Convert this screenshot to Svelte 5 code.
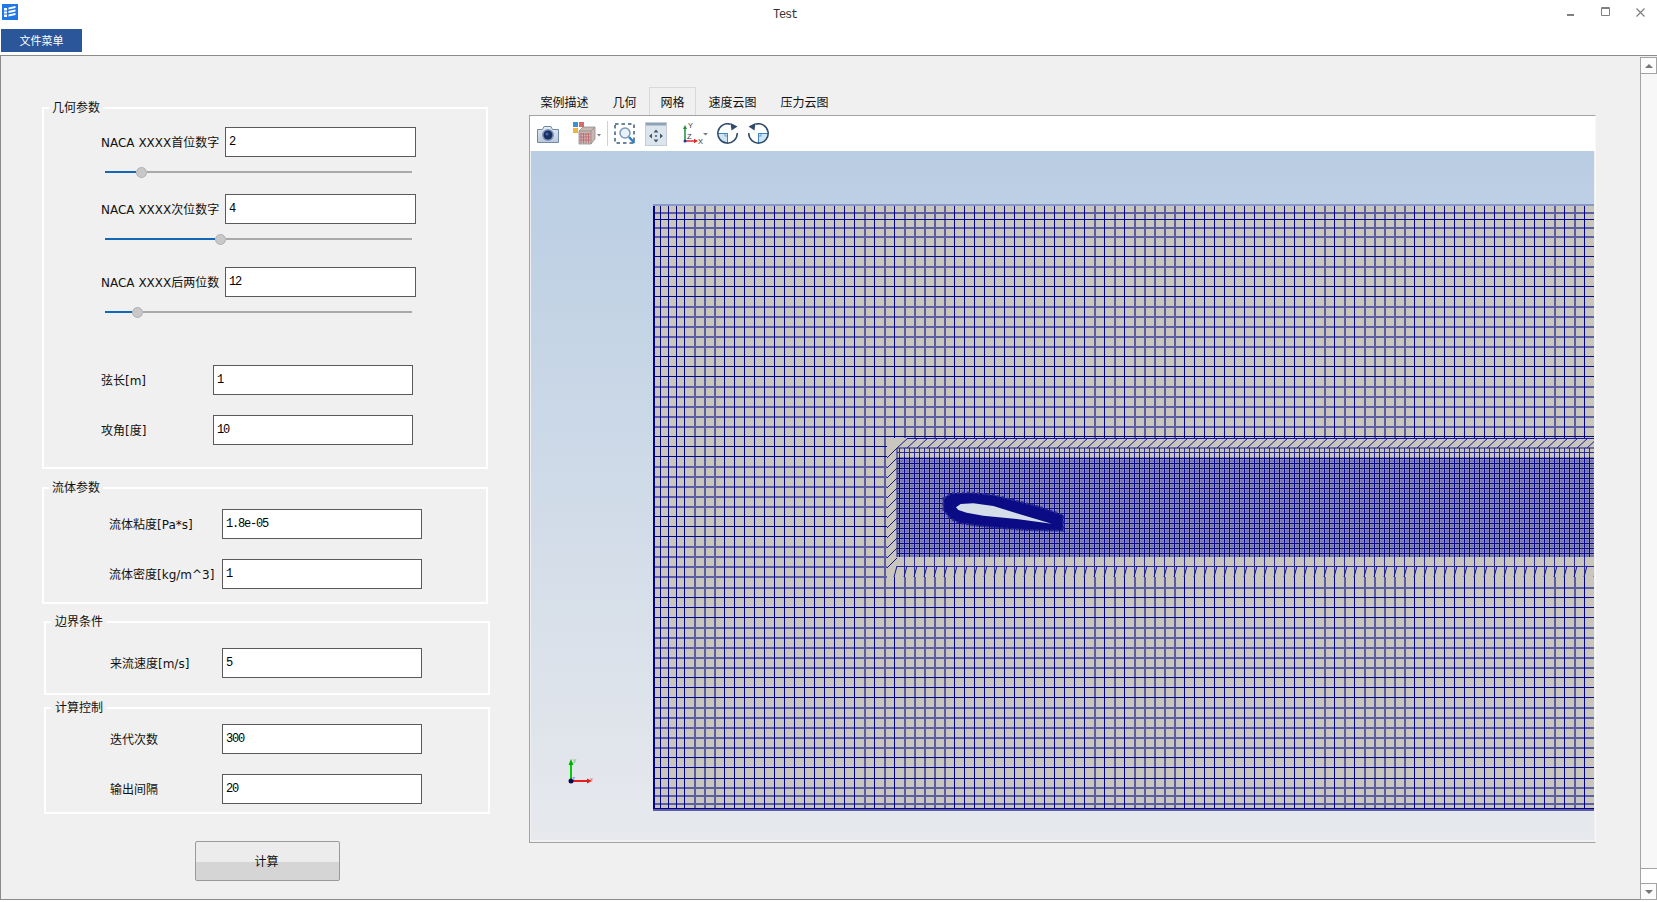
<script>
  const X0 = 653, X1 = 1594, Y0 = 205, Y1 = 809;
  const xs = [653.5, 660, 667.5, 675.5, 684];
  for (let x = 694; x < 1600; x += 10) xs.push(x);
  const ys = [205, 211.5, 219, 226.5, 235.5];
  for (let k = 0; k < 53; k++) ys.push(245.5 + k * 10.03);
  ys.push(777.5, 786.5, 794.5, 802.5, 808.5);

  const thickX = (x) => { if (x < 694) return false; const k = ((x - 694) / 10) % 23; return k <= 2 || k === 17 || k === 19 || k === 21 || k === 22; };
  const thickY = (i) => i === 1 || i === 3 || i === 4 || (i > 6 && i % 8 > 2);

  let thin = '', thick = '';
  xs.forEach((x) => {
    const c = Math.round(x) + 0.5;
    const d = x >= 887 && x < X1 + 10
      ? `M${c} ${Y0}V438M${c} 577V${Y1}`
      : `M${c} ${Y0}V${Y1}`;
    if (thickX(x)) thick += d; else thin += d;
  });
  ys.forEach((y, i) => {
    const c = Math.round(y) + 0.5;
    if (i === 0) return;
    const d = y > 438 && y < 577
      ? `M${X0} ${c}H887`
      : `M${X0} ${c}H${X1}`;
    if (thickY(i)) thick += d; else thin += d;
  });

  let band = 'M897 448H1594M897 448V557M908 438.500H1594';
  for (let x = 908; x < 1604; x += 10) band += `M${x} 438L${x - 11} 448`;
  for (let y = 448; y < 566; y += 10) band += `M887 ${y + 10}L897 ${y}`;
  for (let x = 894; x < 1600; x += 10) band += `M${x} 577L${x + 3} 566`;
  let sparse = '';
  for (let x = 899.5; x < 1600; x += 5) sparse += `M${x} 448V457`;
  for (let x = 904.5; x < 1600; x += 10) sparse += `M${x} 557V577`;
  sparse += 'M897 452.500H1594M897 566.500H1594';

  let denseV = '', denseV2 = '', denseH = '', denseH2 = '';
  for (let x = 899.5; x < 1600; x += 5) denseV += `M${x} 457V557`;
  for (let x = 902; x < 1600; x += 5) denseV2 += `M${x} 457V557`;
  for (let y = 458.5; y < 557; y += 5) denseH += `M897 ${y}H1594`;
  for (let y = 461; y < 557; y += 5) denseH2 += `M897 ${y}H1594`;

  const tabs = ['案例描述', '几何', '网格', '速度云图', '压力云图'];
  const blob = [[220,235],[245,220],[300,218],[370,225],[430,240],[500,258],[580,285],[580,332],[470,330],[400,325],[330,318],[270,310],[240,295],[220,270]]
    .map(([u, v]) => `${870 + u / 3},${420 + v / 3}`).join(' ');
  const foil = [[258,262],[272,252],[310,250],[370,258],[440,280],[545,311],[440,297],[340,287],[290,278],[265,270]]
    .map(([u, v]) => `${870 + u / 3},${420 + v / 3}`).join(' ');
</script>

{#snippet slider(fill)}
  <div class="slider">
    <span class="fill" style="width:{fill}px"></span>
    <span class="knob"></span>
    <span class="rest"></span>
  </div>
{/snippet}

{#snippet field(cls, label, value)}
  <div class="row {cls}">
    <span class="lbl">{label}</span>
    <div class="input">{value}</div>
  </div>
{/snippet}

{#snippet rotor()}
  <path d="M10.500 10.500H.8A9.700 9.700 0 0 0 10.500 20.200z" fill="#cfe4f5" />
  <path d="M.8 10.500h9.700v9.700" fill="none" stroke="#3d86c0" />
  <rect x="8" y="10.500" width="2.500" height="2.500" fill="none" stroke="#3d86c0" stroke-width=".7" />
  <path d="M13.500 1.200A9.700 9.700 0 1 0 20.200 10" fill="none" stroke="#2f4a6c" stroke-width="1.500" />
  <path d="M13.500 0l7 3.500-6 4z" fill="#2f4a6c" />
{/snippet}

<div class="root">
  <header class="title">
    <svg class="logo" viewBox="0 0 16 16" width="16" height="16">
      <rect width="16" height="16" fill="#1f78e6" />
      <path d="M2 4h3v9H2zM6.500 3.500l7-1.500v2l-7 1.500zM6.500 7l7-1.500v2l-7 1.500zM6.500 10.500l7-1.500v2l-7 1.500z" fill="#fff" />
      <path d="M2 7h3M2 10h3" stroke="#1f78e6" />
    </svg>
    <span class="caption">Test</span>
    <div class="winctl">
      <svg viewBox="0 0 7 3" width="7" height="3" class="w-min"><rect width="7" height="2" y="1" fill="#808080" /></svg>
      <svg viewBox="0 0 10 10" width="10" height="10" class="w-max"><path d="M.5.500h8v8h-8z" fill="none" stroke="#808080" /><path d="M0 1.500h9" stroke="#808080" /></svg>
      <svg viewBox="0 0 9 9" width="9" height="9" class="w-close"><path d="M.5.500l8 8M8.500.500l-8 8" stroke="#808080" stroke-width="1.200" /></svg>
    </div>
  </header>

  <div class="menu"><button class="menubtn">文件菜单</button></div>

  <main class="main">
    <section class="left">
      <div class="group g1">
        <span class="legend">几何参数</span>
        {@render field('a', 'NACA XXXX首位数字', '2')}
        {@render slider(31)}
        {@render field('a r2', 'NACA XXXX次位数字', '4')}
        {@render slider(110)}
        {@render field('a r3', 'NACA XXXX后两位数', '12')}
        {@render slider(27)}
        {@render field('b r4', '弦长[m]', '1')}
        {@render field('b r5', '攻角[度]', '10')}
      </div>
      <div class="group g2">
        <span class="legend">流体参数</span>
        {@render field('c', '流体粘度[Pa*s]', '1.8e-05')}
        {@render field('c r6', '流体密度[kg/m^3]', '1')}
      </div>
      <div class="group g3">
        <span class="legend l2">边界条件</span>
        {@render field('d', '来流速度[m/s]', '5')}
      </div>
      <div class="group g4">
        <span class="legend l2">计算控制</span>
        {@render field('d', '迭代次数', '300')}
        {@render field('d r6', '输出间隔', '20')}
      </div>
      <button class="run">计算</button>
    </section>

    <section class="right">
      <nav class="tabs">
        {#each tabs as t, i}
          <span class="tab" class:active={i === 2}>{t}</span>
        {/each}
      </nav>
      <div class="frame">
        <div class="toolbar">
          <svg class="i-cam" width="22" height="18" viewBox="0 0 22 18">
            <defs>
              <linearGradient id="cam" x1="0" y1="0" x2="0" y2="1"><stop offset="0" stop-color="#e4ebf3" /><stop offset="1" stop-color="#b9c8da" /></linearGradient>
            </defs>
            <path d="M.5 4.500h5l1.500-3h7l1.500 3h6v13H.5z" fill="url(#cam)" stroke="#6f8aa8" />
            <circle cx="11" cy="10" r="6" fill="#7d98b8" />
            <circle cx="11" cy="10" r="4.500" fill="#1b2f63" />
            <circle cx="10" cy="9" r="1.500" fill="#4a6aa0" />
          </svg>
          <svg class="i-pal" width="28" height="23" viewBox="0 0 28 23">
            <rect x="0" y="0" width="5" height="5" fill="#3d8fd8" />
            <rect x="6" y="0" width="5" height="5" fill="#d86a6a" />
            <rect x="0" y="6" width="5" height="5" fill="#f0b443" />
            <path d="M6 9l4-4h12v12l-4 5H6z" fill="#c9b7b4" stroke="#8d8d8d" stroke-width=".8" />
            <path d="M6 9h12v13M18 9l4-4" fill="none" stroke="#8d8d8d" stroke-width=".8" />
            <path d="M8 11v10M10.500 11v10M13 11v10M15.500 11v10M6.500 12h11M6.500 15h11M6.500 18h11" stroke="#c0585e" stroke-width=".7" />
            <path d="M24 12h4l-2 2.500z" fill="#7a7a7a" />
          </svg>
          <span class="sep"></span>
          <svg class="i-zoom" width="22" height="22" viewBox="0 0 22 22">
            <rect x="1" y="1" width="19" height="19" fill="none" stroke="#3d5a80" stroke-width="1.500" stroke-dasharray="3.500 3" />
            <circle cx="11" cy="10" r="5" fill="#e8f1f9" stroke="#7c99b8" stroke-width="1.500" />
            <path d="M15 14l5.500 6" stroke="#2f7fc4" stroke-width="2.500" />
          </svg>
          <svg class="i-pan" width="22" height="24" viewBox="0 0 22 24">
            <rect x=".5" y=".5" width="21" height="23" fill="#dce4ec" stroke="#c2ccd8" />
            <rect x="1" y="1" width="20" height="2.500" fill="#8fa3b8" />
            <path d="M11 7.500l2.500 3h-5zM11 20.500l-2.500-3h5zM4 14l3-2.500v5zM18 14l-3-2.500v5z" fill="#3f5873" />
            <circle cx="11" cy="14" r="1" fill="#3f5873" />
          </svg>
          <svg class="i-axes" width="25" height="23" viewBox="0 0 25 23">
            <path d="M2 19V6" stroke="#1c8f3c" stroke-width="1.500" />
            <path d="M2 3l2 4H0z" fill="#1c8f3c" />
            <path d="M2 19h11" stroke="#e0282c" stroke-width="1.500" />
            <path d="M15 19l-4-2.200v4.400z" fill="#e0282c" />
            <circle cx="2" cy="19" r="1.500" fill="#23339a" />
            <text x="5" y="6" class="ax">Y</text>
            <text x="4" y="17" class="ax">Z</text>
            <text x="15" y="21.500" class="ax">X</text>
            <path d="M20 11h5l-2.500 2.500z" fill="#7a7a7a" />
          </svg>
          <svg class="i-rot" width="21" height="21" viewBox="0 0 21 21">
            {@render rotor()}
          </svg>
          <svg class="i-rot2" width="21" height="21" viewBox="0 0 21 21">
            <g transform="translate(21 0) scale(-1 1)">
              {@render rotor()}
            </g>
          </svg>
        </div>
        <div class="view">
          <svg class="mesh" width="1063" height="689" viewBox="531 151 1063 689">
            <rect x={X0} y={Y0} width={X1 - X0} height={Y1 - Y0} fill="#c9c6be" />
            <rect x="897" y="457" width="697" height="100" fill="#9a9ab8" />
            <path d={thick} stroke="#5d5da3" stroke-width="2" fill="none" shape-rendering="crispEdges" />
            <path d={thin} stroke="#00008b" stroke-width="1" fill="none" shape-rendering="crispEdges" />
            <path d={denseV2} stroke="#6a6aa8" stroke-width="1" fill="none" />
            <path d={denseH2} stroke="#6a6aa8" stroke-width="1" fill="none" />
            <path d={denseV} stroke="#00008b" stroke-width="1" fill="none" />
            <path d={denseH} stroke="#0a0a8b" stroke-width="1" fill="none" />
            <path d={sparse} stroke="#2a2a96" stroke-width="1" fill="none" />
            <path d={band} stroke="#16168f" stroke-width="1" fill="none" />
            <path d="M653.500 205V809M653 808.500H1594" stroke="#00008b" fill="none" shape-rendering="crispEdges" />
            <path d="M653 205H1594" stroke="#8b97c8" stroke-width="2" fill="none" shape-rendering="crispEdges" />
            <polygon points={blob} fill="#0b0b85" stroke="#2a2a94" stroke-width="2" stroke-dasharray="3 2" />
            <polygon points={foil} fill="#d4deeb" />
            <path d="M571 781V764" stroke="#00d000" stroke-width="2" />
            <path d="M571 759l2.500 6h-5z" fill="#00b000" />
            <path d="M571 781H588" stroke="#e32020" stroke-width="2" />
            <path d="M592 781l-5-2.500v5z" fill="#e32020" />
            <circle cx="571" cy="781" r="2.500" fill="#0b0b50" />
            <text x="573" y="762" class="tiny g">y</text>
            <text x="590" y="781" class="tiny r">x</text>
            <text x="572" y="780" class="tiny b">z</text>
          </svg>
        </div>
      </div>
    </section>

    <aside class="scroll">
      <div class="sbtn"><span class="up"></span></div>
      <div class="thumb"></div>
      <div class="trackend"></div>
      <div class="sbtn down"><span class="dn"></span></div>
    </aside>
  </main>
</div>

<style>
  :global(body) { margin: 0; background: #fff; }
  .root {
    width: 1657px; height: 902px; overflow: hidden; display: flex; flex-direction: column;
    font-family: "DejaVu Sans", "Noto Sans CJK SC", sans-serif; font-size: 12px; color: #111;
  }
  .title { height: 29px; display: flex; align-items: flex-start; flex: none; }
  .logo { margin: 4px 0 0 2px; flex: none; }
  .caption { margin: 9px 0 0 755px; font: 12px/12px "Liberation Mono", monospace; letter-spacing: -1.2px; color: #333; width: 26px; }
  .winctl { margin-left: auto; width: 96px; height: 29px; display: flex; }
  .w-min { margin: 13px 0 0 6px; }
  .w-max { margin: 7px 0 0 27px; }
  .w-close { margin: 8px 0 0 25px; }
  .menu { height: 26px; flex: none; padding-left: 1px; }
  .menubtn {
    width: 81px; height: 23px; border: 0; padding: 0; background: #2b579a; color: #fff;
    font: 11px/23px "Noto Sans CJK SC", sans-serif; display: block;
  }
  .main {
    flex: none; height: 845px; box-sizing: border-box; border: 1px solid #8a8a8a; border-right: 0;
    background: #f0f0f0; display: flex; align-items: flex-start;
  }
  .left { width: 528px; flex: none; }
  .group { position: relative; border: 2px solid #fff; box-sizing: content-box; width: 442px; margin-left: 41px; }
  .legend {
    position: absolute; left: 5px; top: -10px; padding: 0 3px; background: #f0f0f0;
    font: 12px/16px "Noto Sans CJK SC", sans-serif; color: #111;
  }
  .l2 { left: 5px; padding: 0 4px; }
  .g1 { margin-top: 51px; padding: 18px 0 22px; }
  .g2 { margin-top: 18px; padding: 20px 0 13px; }
  .g3 { margin-top: 17px; margin-left: 43px; padding: 25px 0 15px; }
  .g4 { margin-top: 12px; margin-left: 43px; padding: 15px 0 8px; }
  .row { display: flex; align-items: center; height: 30px; }
  .lbl { white-space: nowrap; flex: none; margin-bottom: 2px; }
  .input {
    box-sizing: border-box; height: 30px; flex: none; border: 1px solid #5a5a5a; background: #fff;
    padding-left: 3px; font: 12px/29px "Liberation Mono", monospace; letter-spacing: -1.2px; color: #000;
  }
  .row.a .lbl { margin-left: 57px; width: 124px; }
  .row.a .input { width: 191px; }
  .row.b .lbl { margin-left: 57px; width: 112px; }
  .row.b .input { width: 200px; }
  .row.c .lbl { margin-left: 65px; width: 113px; }
  .row.c .input { width: 200px; }
  .row.d .lbl { margin-left: 64px; width: 112px; }
  .row.d .input { width: 200px; }
  .r2 { margin-top: 14px; }
  .r3 { margin-top: 20px; }
  .r4 { margin-top: 45px; }
  .r5 { margin-top: 20px; }
  .r6 { margin-top: 20px; }
  .slider { display: flex; align-items: center; height: 16px; margin: 7px 0 0 61px; width: 307px; }
  .fill { height: 2px; background: #1068b6; flex: none; }
  .rest { height: 2px; background: #a9a9a9; flex: 1; }
  .knob { width: 11px; height: 11px; box-sizing: border-box; border-radius: 50%; background: #c8c8c8; border: 1px solid #b0b0b0; flex: none; }
  .run {
    display: block; width: 145px; height: 40px; margin: 27px 0 0 194px; padding: 0 2px 2px 0;
    border: 1px solid #9a9a9a; border-radius: 2px;
    background: linear-gradient(#ececec 0 52%, #d5d5d5 52% 100%);
    font: 12px "Noto Sans CJK SC", sans-serif; color: #111;
  }
  .right { width: 1069px; flex: none; margin-top: 31px; }
  .tabs { display: flex; gap: 1px; height: 28px; }
  .tab {
    padding: 0 10.5px; font: 12px/27px "Noto Sans CJK SC", sans-serif; color: #111;
    box-sizing: border-box; height: 28px; border: 1px solid transparent; border-bottom: 0;
  }
  .tab.active { border-color: #d9d9d9; }
  .frame {
    box-sizing: border-box; width: 1067px; height: 728px; border: 1px solid #a3a3a3; border-right: 1px solid #f8f8f8;
    padding-right: 1px; background: #f0f0f0; display: flex; flex-direction: column;
  }
  .toolbar { height: 35px; flex: none; background: #fff; display: flex; align-items: center; padding-left: 7px; width: 1065px; box-sizing: border-box; }
  .i-pal { margin-left: 14px; }
  .sep { width: 1px; height: 25px; background: #d0d0d0; margin-left: 6px; flex: none; }
  .i-zoom { margin-left: 6px; }
  .i-pan { margin-left: 9px; }
  .i-axes { margin-left: 16px; }
  .i-rot { margin-left: 9px; }
  .i-rot2 { margin-left: 10px; }
  .ax { font: 7.5px "Liberation Sans", sans-serif; fill: #333; }
  .view {
    width: 1063px; height: 689px; margin-left: 1px; flex: none;
    background: linear-gradient(#b9cde3, #e7e9ed);
  }
  .mesh { display: block; }
  .tiny { font: 6px "Liberation Sans", sans-serif; }
  .tiny.g { fill: #40c040; } .tiny.r { fill: #e05050; } .tiny.b { fill: #7070e0; }
  .scroll {
    margin-left: auto; width: 17px; height: 843px; box-sizing: border-box; margin-top: 1px;
    display: flex; flex-direction: column;
    border-left: 1px solid #a3a3a3; background: #f7f7f7;
  }
  .sbtn { height: 17px; flex: none; box-sizing: border-box; border: 1px solid #a3a3a3; border-left: 0; background: #fcfcfc; display: flex; align-items: center; justify-content: center; }
  .up { width: 0; height: 0; border: 4.500px solid transparent; border-top: 0; border-bottom: 4px solid #777; }
  .dn { width: 0; height: 0; border: 4.500px solid transparent; border-bottom: 0; border-top: 4px solid #777; }
  .thumb { height: 794px; flex: none; background: #f7f7f7; }
  .trackend { height: 14px; flex: none; background: #fff; border-top: 1px solid #a3a3a3; }
</style>
